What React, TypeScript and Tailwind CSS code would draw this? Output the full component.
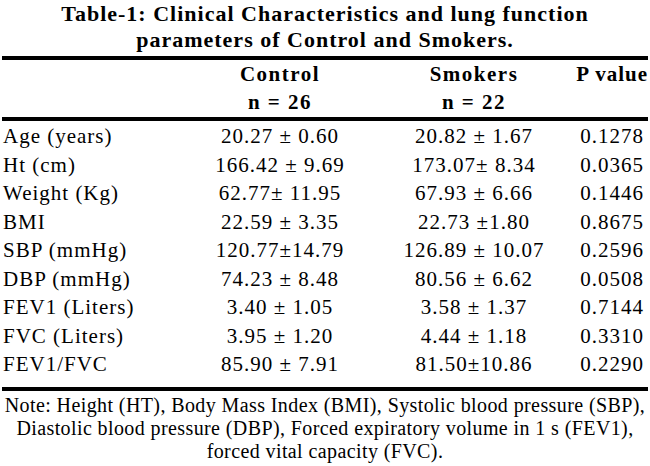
const rows: [string, string, string, string][] = [
  ["Age (years)", "20.27 ± 0.60", "20.82 ± 1.67", "0.1278"],
  ["Ht (cm)", "166.42 ± 9.69", "173.07± 8.34", "0.0365"],
  ["Weight (Kg)", "62.77± 11.95", "67.93 ± 6.66", "0.1446"],
  ["BMI", "22.59 ± 3.35", "22.73 ±1.80", "0.8675"],
  ["SBP (mmHg)", "120.77±14.79", "126.89 ± 10.07", "0.2596"],
  ["DBP (mmHg)", "74.23 ± 8.48", "80.56 ± 6.62", "0.0508"],
  ["FEV1 (Liters)", "3.40 ± 1.05", "3.58 ± 1.37", "0.7144"],
  ["FVC (Liters)", "3.95 ± 1.20", "4.44 ± 1.18", "0.3310"],
  ["FEV1/FVC", "85.90 ± 7.91", "81.50±10.86", "0.2290"],
];

export default function App() {
  return (
    <div className="w-[650px] h-[466px] bg-white text-black font-[Liberation_Serif,Times_New_Roman,serif] overflow-hidden">
      <div className="pt-[1px] text-center font-bold text-[22px] leading-[26px] tracking-[1px]">
        <div>Table-1: Clinical Characteristics and lung function</div>
        <div>parameters of Control and Smokers.</div>
      </div>

      <div className="mx-[2px] mt-[3px] h-[4px] bg-black" />

      <div className="grid grid-cols-[187px_186px_202px_1fr] font-bold text-[21px] leading-[28px] tracking-[1.5px]">
        <div />
        <div className="text-center">Control</div>
        <div className="text-center">Smokers</div>
        <div className="text-right pr-[2px] tracking-[1px]">P value</div>
        <div />
        <div className="text-center">n = 26</div>
        <div className="text-center">n = 22</div>
        <div />
      </div>

      <div className="mx-[2px] mt-[1px] h-[4px] bg-black" />

      <div className="pt-[1px] text-[21px] leading-[28.5px] tracking-[1px]">
        {rows.map((r) => (
          <div key={r[0]} className="grid grid-cols-[187px_186px_202px_1fr]">
            <div className="pl-[3px] whitespace-nowrap">{r[0]}</div>
            <div className="text-center whitespace-nowrap">{r[1]}</div>
            <div className="text-center whitespace-nowrap">{r[2]}</div>
            <div className="text-right pr-[6px] whitespace-nowrap">{r[3]}</div>
          </div>
        ))}
      </div>

      <div className="mx-[2px] mt-[8px] h-[4px] bg-black" />

      <div className="mt-[3px] text-center text-[20px] leading-[23px] tracking-[0.4px]">
        <div>Note: Height (HT), Body Mass Index (BMI), Systolic blood pressure (SBP),</div>
        <div>Diastolic blood pressure (DBP), Forced expiratory volume in 1 s (FEV1),</div>
        <div>forced vital capacity (FVC).</div>
      </div>
    </div>
  );
}
